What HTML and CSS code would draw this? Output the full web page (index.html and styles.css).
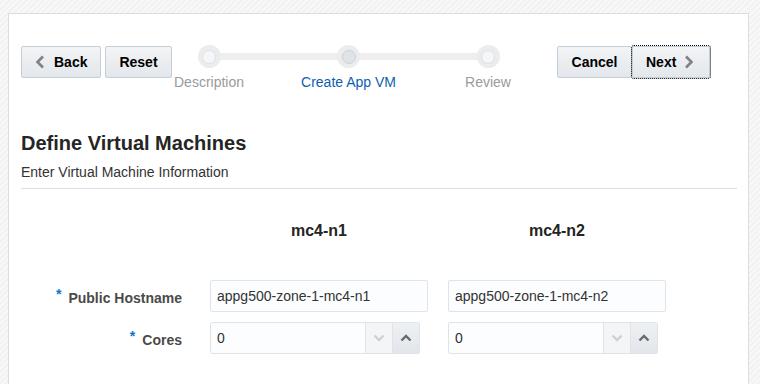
FILE: index.html
```html
<!DOCTYPE html>
<html lang="en">
<head>
    <meta charset="UTF-8">
    <meta name="viewport" content="width=device-width, initial-scale=1.0">
    <title>Create App VM</title>
    <link rel="stylesheet" href="styles.css">
</head>
<body>
    <div class="panel">
        <div class="toolbar">
            <div class="btn-group">
                <button class="btn btn-back">
                    <svg class="chev" width="10" height="14" viewBox="0 0 10 14"><polyline points="8,1.5 2.5,7 8,12.5" /></svg>
                    Back
                </button>
                <button class="btn btn-reset">Reset</button>
            </div>

            <div class="train">
                <div class="stop">
                    <div class="dot"><span></span></div>
                    <div class="stop-label">Description</div>
                </div>
                <div class="stop current">
                    <div class="dot"><span></span></div>
                    <div class="stop-label">Create App VM</div>
                </div>
                <div class="stop">
                    <div class="dot"><span></span></div>
                    <div class="stop-label">Review</div>
                </div>
            </div>

            <div class="btn-group right">
                <button class="btn btn-cancel">Cancel</button>
                <button class="btn btn-next focused">
                    Next
                    <svg class="chev" width="10" height="14" viewBox="0 0 10 14"><polyline points="2,1.5 7.5,7 2,12.5" /></svg>
                </button>
            </div>
        </div>

        <h1>Define Virtual Machines</h1>
        <p class="subtitle">Enter Virtual Machine Information</p>

        <div class="vm-form">
            <div></div>
            <div class="col-head">mc4-n1</div>
            <div class="col-head">mc4-n2</div>

            <label class="field-label"><span class="req">*</span>Public Hostname</label>
            <input class="text-field" type="text" value="appg500-zone-1-mc4-n1">
            <input class="text-field" type="text" value="appg500-zone-1-mc4-n2">

            <label class="field-label"><span class="req">*</span>Cores</label>
            <div class="spin">
                <input type="text" value="0">
                <span class="spin-btn disabled"><svg width="12" height="8" viewBox="0 0 12 8"><polyline points="1.5,1.5 6,6 10.5,1.5" /></svg></span>
                <span class="spin-btn"><svg width="12" height="8" viewBox="0 0 12 8"><polyline points="1.5,6.5 6,2 10.5,6.5" /></svg></span>
            </div>
            <div class="spin">
                <input type="text" value="0">
                <span class="spin-btn disabled"><svg width="12" height="8" viewBox="0 0 12 8"><polyline points="1.5,1.5 6,6 10.5,1.5" /></svg></span>
                <span class="spin-btn"><svg width="12" height="8" viewBox="0 0 12 8"><polyline points="1.5,6.5 6,2 10.5,6.5" /></svg></span>
            </div>
        </div>
    </div>
</body>
</html>
```

FILE: styles.css
```css
* {
    box-sizing: border-box;
}

body {
    margin: 0;
    padding: 13px 11px 0 8px;
    font-family: "Liberation Sans", Arial, sans-serif;
    font-size: 14px;
    color: #333;
    background-color: #f6f6f6;
    background-image: repeating-linear-gradient(135deg, #f8f8f8 0, #f8f8f8 2px, #f2f2f2 2px, #f2f2f2 4px);
    overflow: hidden;
}

.panel {
    background-color: #ffffff;
    border: 1px solid #d6dfe6;
    border-bottom: none;
    padding: 32px 11px 0 12px;
    min-height: 400px;
}

/* toolbar */
.toolbar {
    display: flex;
    align-items: flex-start;
}

.btn-group {
    display: flex;
    gap: 4px;
}

.btn-group.right {
    gap: 0;
    margin-left: auto;
    margin-right: 27px;
}

.btn {
    display: flex;
    align-items: center;
    justify-content: center;
    height: 32px;
    padding: 0 12px;
    font-family: inherit;
    font-size: 14px;
    font-weight: bold;
    color: #000;
    background: linear-gradient(#f2f4f6, #e3e7eb);
    border: 1px solid #c4ced7;
    border-radius: 2px;
}

.btn-back {
    width: 80px;
    padding-left: 13px;
    gap: 9px;
    justify-content: flex-start;
}

.btn-reset {
    width: 67px;
}

.btn-cancel {
    width: 75px;
}

.btn-next {
    width: 78px;
    padding-left: 13px;
    gap: 8px;
    justify-content: flex-start;
}

.btn.focused {
    outline: 1px dotted #000;
}

.chev {
    fill: none;
    stroke: #7d8287;
    stroke-width: 2.6;
}

/* train */
.train {
    position: relative;
    display: flex;
    justify-content: space-between;
    width: 355px;
    margin-top: -1px;
    margin-left: -1px;
}

.train::before {
    content: "";
    position: absolute;
    left: 38px;
    right: 38px;
    top: 8px;
    height: 7px;
    background-color: #eeeeee;
}

.stop {
    position: relative;
    width: 76px;
    display: flex;
    flex-direction: column;
    align-items: center;
}

.dot {
    width: 23px;
    height: 23px;
    border-radius: 50%;
    background-color: #ececec;
    display: flex;
    align-items: center;
    justify-content: center;
}

.dot span {
    width: 14px;
    height: 14px;
    border-radius: 50%;
    background-color: #f4f6f8;
    border: 1px solid #dce2e8;
}

.stop.current .dot span {
    background-color: #dfe4e9;
    border-color: #c9d1d9;
}

.stop-label {
    margin-top: 6px;
    line-height: 16px;
    white-space: nowrap;
    color: #9b9b9b;
}

.stop.current .stop-label {
    color: #0d5fac;
}

/* heading */
h1 {
    margin: 41px 0 0 0;
    font-size: 20px;
    line-height: 24px;
    color: #252525;
}

.subtitle {
    margin: 8px 0 0 0;
    line-height: 18px;
    padding-bottom: 7px;
    border-bottom: 1px solid #d6dfe6;
}

/* form */
.vm-form {
    display: grid;
    grid-template-columns: 169px 218px 218px;
    column-gap: 20px;
    row-gap: 10px;
    align-items: center;
    margin-top: 32px;
}

.col-head {
    text-align: center;
    font-size: 16px;
    font-weight: bold;
    line-height: 20px;
    color: #252525;
    margin-bottom: 29px;
}

.field-label {
    text-align: right;
    padding-right: 8px;
    font-weight: bold;
    color: #4a4a4a;
}

.req {
    color: #0e72d1;
    margin-right: 7px;
    vertical-align: 4px;
}

.text-field,
.spin input {
    height: 32px;
    padding: 0 6px;
    font-family: inherit;
    font-size: 14px;
    color: #333;
    background-color: #fcfdfe;
    border: 1px solid #dfe4ea;
    border-radius: 2px;
}

.spin {
    display: flex;
    width: 210px;
    height: 32px;
    border: 1px solid #dfe4ea;
    border-radius: 2px;
}

.spin input {
    flex: 1;
    min-width: 0;
    height: 30px;
    border: none;
}

.spin-btn {
    width: 27px;
    display: flex;
    align-items: center;
    justify-content: center;
    border-left: 1px solid #dfe4ea;
    background: linear-gradient(#eef1f3, #e2e6ea);
}

.spin-btn svg {
    fill: none;
    stroke: #666b70;
    stroke-width: 2.4;
}

.spin-btn.disabled {
    background: #f3f5f7;
}

.spin-btn.disabled svg {
    stroke: #ccd1d6;
}
```
